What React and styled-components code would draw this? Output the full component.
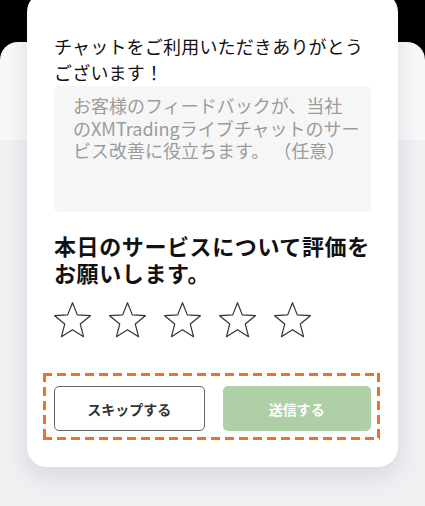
import styled, { createGlobalStyle } from "styled-components"

const GlobalStyle = createGlobalStyle`
    body {
        margin: 0;
        background: #000;
        font-family: "Noto Sans CJK JP", "Noto Sans", sans-serif;
    }
`

const dash = (dir) => `repeating-linear-gradient(${dir}, #f07024 0 9px, transparent 9px 14px)`

function starPoints(cx, cy, R, r) {
    const pts = []
    for (let i = 0; i < 10; i++) {
        const rad = i % 2 === 0 ? R : r
        const a = -Math.PI / 2 + (i * Math.PI) / 5
        pts.push(`${(cx + rad * Math.cos(a)).toFixed(2)},${(cy + rad * Math.sin(a)).toFixed(2)}`)
    }
    return pts.join(" ")
}

function Star() {
    return (
        <svg width="37" height="36" viewBox="0 0 37 36">
            <polygon
                points={starPoints(18.5, 19.5, 18.8, 8.2)}
                fill="none"
                stroke="#333"
                strokeWidth="1.2"
                strokeLinejoin="round"
            />
        </svg>
    )
}

function App() {
    return (
        <>
            <GlobalStyle />
            <Stage>
                <Backdrop />
                <Card>
                    <Title>チャットをご利用いただきありがとうございます！</Title>
                    <Feedback placeholder={"お客様のフィードバックが、当社\nのXMTradingライブチャットのサー\nビス改善に役立ちます。 （任意）"} />
                    <Heading>本日のサービスについて評価をお願いします。</Heading>
                    <Stars>
                        {[1, 2, 3, 4, 5].map(n => <Star key={n} />)}
                    </Stars>
                    <Actions>
                        <Button>スキップする</Button>
                        <Button primary>送信する</Button>
                    </Actions>
                </Card>
            </Stage>
        </>
    )
}

export default App

const Stage = styled.div`
    position: relative;
    width: 425px;
    height: 506px;
    overflow: hidden;
    background: #000;
`

const Backdrop = styled.div`
    margin-top: 42px;
    height: 464px;
    border-radius: 18px 18px 0 0;
    background: linear-gradient(#f8f8fa 0, #f8f8fa 98px, #f0f0f3 98px);
`

const Card = styled.div`
    position: absolute;
    top: -8px;
    left: 27px;
    width: 371px;
    height: 475px;
    box-sizing: border-box;
    padding: 41px 27px 0 27px;
    display: flex;
    flex-direction: column;
    background: #fff;
    border-radius: 20px;
    box-shadow: 0 8px 22px rgba(40, 40, 70, 0.13);
`

const Title = styled.div`
    font-size: 18px;
    line-height: 26px;
    letter-spacing: 0.2px;
    color: #111;
`

const Feedback = styled.textarea`
    margin-top: 1px;
    height: 126px;
    box-sizing: border-box;
    padding: 8px 4px 0 19px;
    border: none;
    border-radius: 5px;
    background: #f7f6f7;
    resize: none;
    outline: none;
    font-family: inherit;
    font-size: 18px;
    line-height: 22.5px;
    color: #333;

    &::placeholder {
        color: #9b9b9b;
    }
`

const Heading = styled.div`
    margin-top: 20px;
    font-size: 22px;
    font-weight: 700;
    line-height: 27px;
    letter-spacing: 0.6px;
    color: #111;
`

const Stars = styled.div`
    display: flex;
    gap: 18px;
    margin-top: 16px;
`

const Actions = styled.div`
    display: flex;
    gap: 18px;
    margin: 35px -9px 0 -11px;
    padding: 13px 9px 9px 11px;
    background:
        ${dash("90deg")} top left / 100% 3px no-repeat,
        ${dash("90deg")} bottom left / 100% 3px no-repeat,
        ${dash("180deg")} top left / 3px 100% no-repeat,
        ${dash("180deg")} top right / 3px 100% no-repeat;
`

const Button = styled.button`
    flex: 1;
    height: 45px;
    box-sizing: border-box;
    border-radius: 5px;
    border: ${props => props.primary ? "none" : "1px solid #666"};
    background: ${props => props.primary ? "#afd0a6" : "#fff"};
    color: ${props => props.primary ? "#fff" : "#333"};
    font-family: inherit;
    font-size: 14px;
    font-weight: 700;
    cursor: pointer;
`
